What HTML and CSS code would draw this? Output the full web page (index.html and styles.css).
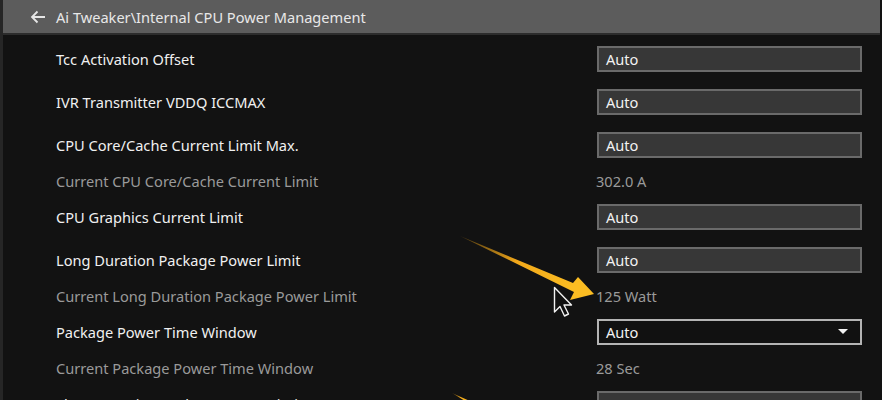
FILE: index.html
```html
<!DOCTYPE html>
<html lang="en">
<head>
    <meta charset="UTF-8">
    <title>Internal CPU Power Management</title>
    <link rel="stylesheet" href="styles.css">
</head>
<body>
    <div class="screen">
        <header class="path-bar">
            <svg class="back" width="16" height="14" viewBox="0 0 16 14">
                <path d="M15 7H2M7.5 1.5L2 7l5.5 5.5" fill="none" stroke="#e6e6e6" stroke-width="1.8"/>
            </svg>
            <span>Ai Tweaker\Internal CPU Power Management</span>
        </header>

        <div class="settings">
            <div class="row">
                <div class="label">Tcc Activation Offset</div>
                <div class="field">Auto</div>
            </div>
            <div class="row">
                <div class="label">IVR Transmitter VDDQ ICCMAX</div>
                <div class="field">Auto</div>
            </div>
            <div class="row">
                <div class="label">CPU Core/Cache Current Limit Max.</div>
                <div class="field">Auto</div>
            </div>
            <div class="row info">
                <div class="label">Current CPU Core/Cache Current Limit</div>
                <div class="value">302.0 A</div>
            </div>
            <div class="row">
                <div class="label">CPU Graphics Current Limit</div>
                <div class="field">Auto</div>
            </div>
            <div class="row">
                <div class="label">Long Duration Package Power Limit</div>
                <div class="field">Auto</div>
            </div>
            <div class="row info">
                <div class="label">Current Long Duration Package Power Limit</div>
                <div class="value">125 Watt</div>
            </div>
            <div class="row">
                <div class="label">Package Power Time Window</div>
                <div class="field select">Auto <span class="caret"></span></div>
            </div>
            <div class="row info">
                <div class="label">Current Package Power Time Window</div>
                <div class="value">28 Sec</div>
            </div>
            <div class="row">
                <div class="label">Short Duration Package Power Limit</div>
                <div class="field">Auto</div>
            </div>
        </div>

        <!-- annotation arrows + mouse pointer drawn over the screenshot -->
        <svg class="marks" width="882" height="400" viewBox="0 0 882 400">
            <defs>
                <linearGradient id="gold" x1="0" y1="0" x2="1" y2="0.4">
                    <stop offset="0" stop-color="#c98a10" stop-opacity="0.3"/>
                    <stop offset="0.5" stop-color="#f2a81a"/>
                    <stop offset="1" stop-color="#fbbd22"/>
                </linearGradient>
            </defs>
            <path d="M460 236 L573 283 L578 277 L594 294 L570 300 L574 292 Z" fill="url(#gold)"/>
            <path d="M452 393 L472 402 L470 404 Z" fill="url(#gold)"/>
            <path d="M554.5 287.5 V312 L560 306.5 L564.5 316 L568.5 314 L564 305 L571.5 305 Z" fill="#111" stroke="#f2f2f2" stroke-width="1.4" stroke-linejoin="round"/>
        </svg>
    </div>
</body>
</html>
```

FILE: styles.css
```css
body {
    margin: 0;
    background: #121212;
    font-family: "Noto Sans", "Open Sans", sans-serif;
    overflow: hidden;
}

.screen {
    position: relative;
    width: 882px;
    height: 400px;
    border-left: 3px solid #262626;
    box-sizing: border-box;
}

.path-bar {
    display: flex;
    align-items: center;
    gap: 10px;
    height: 33px;
    padding-left: 27px;
    margin-right: 2px;
    background: #5c5c5c;
    border-bottom: 2px solid #2c2c2c;
    color: #e8e8e8;
    font-size: 14.6px;
}

.settings {
    padding-top: 2px;
}

.row {
    display: flex;
    align-items: center;
    height: 43px;
}

.row.info {
    height: 29px;
}

.label {
    width: 540px;
    padding-left: 53px;
    color: #f0f0f0;
    font-size: 14.6px;
}

.info .label,
.info .value {
    color: #9a9a9a;
}

.value {
    font-size: 14.6px;
}

.field {
    display: flex;
    align-items: center;
    box-sizing: border-box;
    width: 265px;
    height: 26px;
    margin-left: 1px;
    padding-left: 7px;
    background: #373737;
    border: 2px solid #6a6a6a;
    color: #f2f2f2;
    font-size: 14.6px;
}

.field.select {
    background: #111;
    border-color: #b4b4b4;
    justify-content: space-between;
    padding-right: 12px;
}

.caret {
    width: 0;
    height: 0;
    border-left: 5px solid transparent;
    border-right: 5px solid transparent;
    border-top: 5px solid #f2f2f2;
}

.marks {
    position: absolute;
    top: 0;
    left: -3px;
    pointer-events: none;
}
```
